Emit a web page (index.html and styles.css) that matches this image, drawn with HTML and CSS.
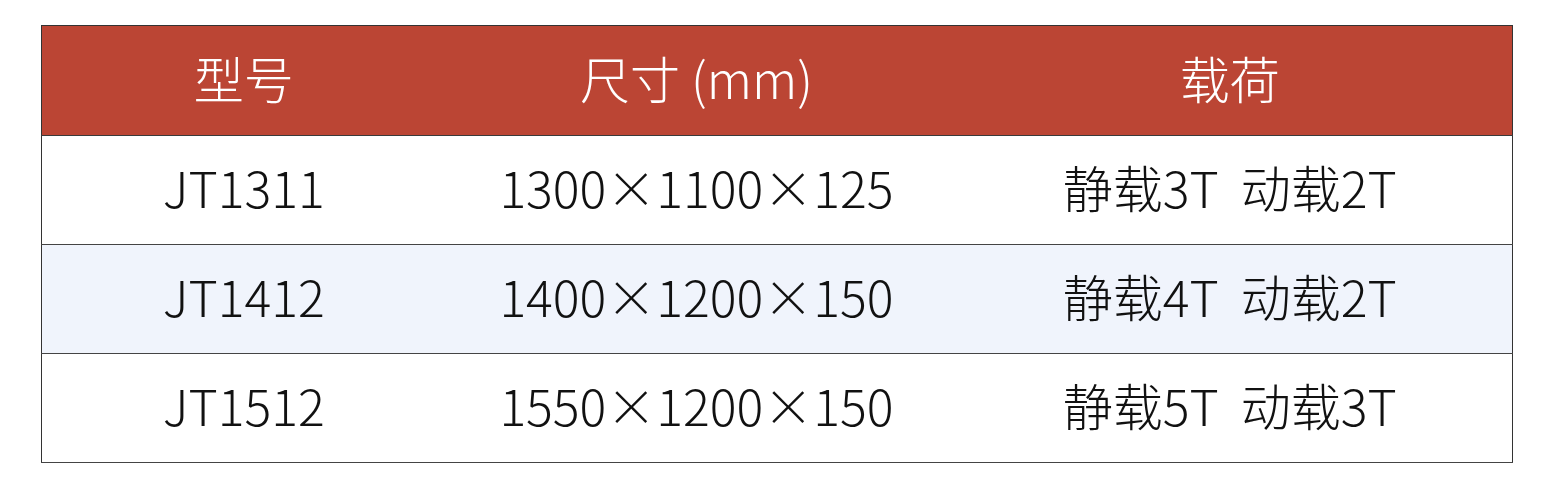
FILE: index.html
```html
<!DOCTYPE html>
<html lang="zh">
<head>
<meta charset="utf-8">
<link rel="stylesheet" href="styles.css">
</head>
<body>
<table class="spec">
  <colgroup>
    <col class="c1"><col class="c2"><col class="c3">
  </colgroup>
  <thead>
    <tr><th>型号</th><th>尺寸 (mm)</th><th>载荷</th></tr>
  </thead>
  <tbody>
    <tr><td>JT1311</td><td>1300×1100×125</td><td>静载3T&nbsp;&nbsp;动载2T</td></tr>
    <tr class="alt"><td>JT1412</td><td>1400×1200×150</td><td>静载4T&nbsp;&nbsp;动载2T</td></tr>
    <tr><td>JT1512</td><td>1550×1200×150</td><td>静载5T&nbsp;&nbsp;动载3T</td></tr>
  </tbody>
</table>
</body>
</html>
```
FILE: styles.css
```css
html, body {
  margin: 0;
  background: #ffffff;
}
body {
  padding: 25px 0 0 41px;
  font-family: "Noto Sans CJK SC", "Noto Sans", sans-serif;
  font-weight: 300;
}
.spec {
  width: 1472px;
  border-collapse: collapse;
  border: 1px solid #333;
  table-layout: fixed;
}
.c1 { width: 404px; }
.c2 { width: 502px; }
.c3 { width: auto; }
.spec th {
  background: #bb4534;
  color: #ffffff;
  font-weight: 300;
  font-size: 50px;
  line-height: 60px;
  height: 102px;
  padding: 0 0 7px;
  text-align: center;
  border-bottom: 1px solid #3a3a3a;
}
.spec td {
  color: #111;
  font-size: 50px;
  line-height: 60px;
  height: 100px;
  padding: 0 0 8px;
  text-align: center;
  border-bottom: 1px solid #444;
}
.spec tr.alt td {
  background: #f0f4fc;
}
```
